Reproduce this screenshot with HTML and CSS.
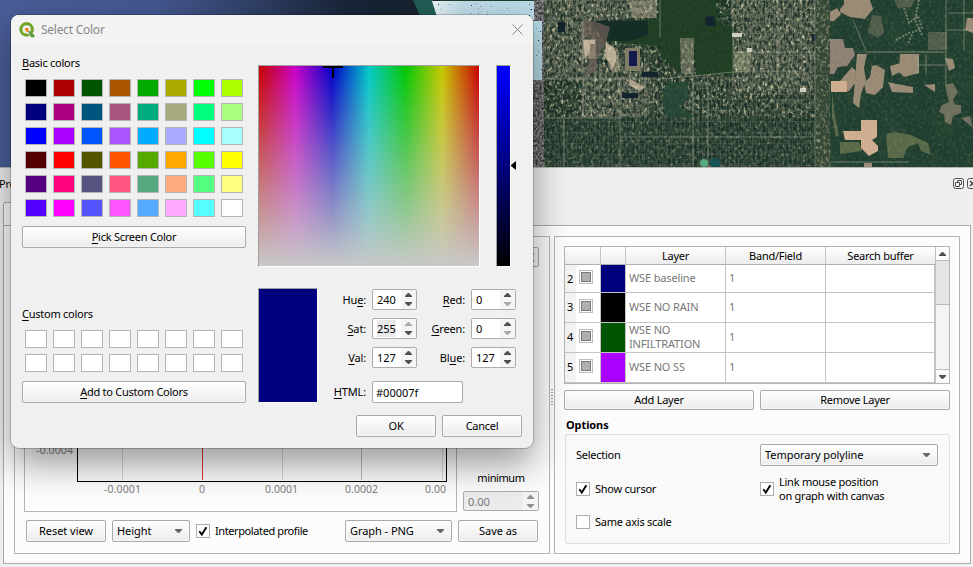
FILE: index.html
```html
<!DOCTYPE html>
<html lang="en">
<head>
<meta charset="utf-8">
<title>Select Color</title>
<link rel="stylesheet" href="styles.css">
</head>
<body>
<svg class="defs" width="0" height="0" aria-hidden="true">
  <symbol id="up" viewBox="0 0 7 4"><path d="M3 0h1l1 1 1 1 1 1v1H0V3l1-1 1-1z"/></symbol>
  <symbol id="down" viewBox="0 0 7 4"><path d="M0 0h7v1L4 4H3L0 1z"/></symbol>
  <symbol id="check" viewBox="0 0 12 12"><path d="M2.3 6.2l2.5 3.3L9.4 2.3" fill="none" stroke="#000" stroke-width="1.9"/></symbol>
</svg>
<main class="window">
  <svg class="map" viewBox="0 0 973 167" width="973" height="167" aria-hidden="true">
    <defs>
      <linearGradient id="sea" x1="0" x2="1"><stop offset="0" stop-color="#4a5d98"/><stop offset=".35" stop-color="#455791"/><stop offset=".55" stop-color="#33436b"/><stop offset=".8" stop-color="#182437"/><stop offset="1" stop-color="#15222b"/></linearGradient>
      <linearGradient id="ice" x1="0" x2="1"><stop offset="0" stop-color="#e8f2f6"/><stop offset=".3" stop-color="#bedbe6"/><stop offset="1" stop-color="#b7d9e5"/></linearGradient>
      <filter id="town" x="0" y="0" width="100%" height="100%"><feTurbulence type="fractalNoise" baseFrequency=".34 .28" numOctaves="3" seed="7"/><feColorMatrix values="1.2 .4 0 0 -.22  1.1 .4 0 0 -.18  .9 .4 0 0 -.19  3.6 0 0 0 -1.6"/></filter>
      <filter id="dark" x="0" y="0" width="100%" height="100%"><feTurbulence type="fractalNoise" baseFrequency=".38 .22" numOctaves="2" seed="21"/><feColorMatrix values="0 0 0 0 .07  0 0 0 0 .15  0 0 0 0 .12  0 5 0 0 -2.2"/></filter>
      <filter id="wood" x="0" y="0" width="100%" height="100%"><feTurbulence type="fractalNoise" baseFrequency=".045" numOctaves="4" seed="3"/><feColorMatrix values="0 0 0 0 .3  0 0 0 0 .38  0 0 0 0 .24  2.2 0 0 0 -.95"/></filter>
      <filter id="specks" x="0" y="0" width="100%" height="100%"><feTurbulence type="fractalNoise" baseFrequency=".55" numOctaves="1" seed="9"/><feColorMatrix values="0 0 0 0 .12  0 0 0 0 .15  0 0 0 0 .2  18 0 0 0 -12.6"/></filter>
      <filter id="gray" x="0" y="0" width="100%" height="100%"><feTurbulence type="fractalNoise" baseFrequency=".5 .4" numOctaves="2" seed="4"/><feColorMatrix values=".8 0 0 0 0  .8 0 0 0 0  .8 0 0 0 .01  0 0 0 0 1"/></filter>
      <pattern id="streets" width="9" height="11" patternUnits="userSpaceOnUse"><path d="M0 .5h9M.5 0v11M5.5 0v11" stroke="#8a907d" stroke-width=".7" opacity=".3"/></pattern>
    </defs>
    <rect width="973" height="167" fill="#213f30"/>
    <rect x="533" width="440" height="167" filter="url(#wood)" opacity=".6"/>
    <path d="M533 0H654L644 20H590V40L644 50 693 75H733L750 12 815 0V167H533z" fill="#34483a"/>
    <path d="M544 0H656V18L600 20 588 35V64L650 62V79H533V0zM582 79H650V117H582zM730 0H815V95H733z" fill="#6c7261" opacity=".6"/>
    <path d="M533 0H654L644 20H596L590 62 620 79H733V10L815 0V167H533z" filter="url(#town)" opacity=".5"/>
    <path d="M533 0H654V79H650V117H582V79H533zM733 0H815V95H733z" filter="url(#town)" opacity=".35"/>
    <rect x="533" y="0" width="283" height="167" filter="url(#dark)" opacity=".75"/>
    <path d="M533 0H650V79H533zM690 76H816V167H544V118H585V79H690zM735 0H816V76H735z" fill="url(#streets)"/>
    <path d="M650 118H816V167H544V118z" fill="#18362a" opacity=".25"/>
    <path d="M659 0H716L718 20 724 25 733 27V74H696L694 40 680 38V74L661 55V46L620 43 597 30V21L645 20 658 18z" fill="#203e23" opacity=".93"/>
    <path d="M590 21H648V35L630 41H604z" fill="#142d26"/>
    <path d="M666 83l22-2v18l-8 8 17 10h-30l-5-18z" fill="#254736" opacity=".85"/>
    <path d="M582 21h12l16 6-4 15-8 15-2 14-11 6 4-18 1-20-9-4z" fill="#6c5f58" opacity=".75"/>
    <path d="M582 39h14v20h-13zM605 42l13 7 3 16-8 10-5-13zM629 2l28-2v18h-24zM680 38h14v36h-13z" fill="#d1bea0" opacity=".35"/>
    <path d="M583 40h12v4h-5v9l-5 5zM606 43l8 5 3 9-4 12-4-7-5-5zM630 79l15 8-5 4-12-6z" fill="#e0cbb0" opacity=".65"/>
    <path d="M625 48h15v23h-15z" fill="#817c65"/><path d="M629 51h8v15h-8z" fill="#11194d"/>
    <path d="M642 72h16v5h-16zM622 93h16v5h-16zM705 17l9-1 2 10h-10zM558 22h7v10h-7zM812 34h7v7h-7z" fill="#13242e"/>
    <g fill="none" stroke="#b1b4a1" stroke-width=".8" opacity=".6"><path d="M533 79H660l44-4 29-3 17-1h50M533 118h88M620 79v88M621 137h194M583 0v118M564 118v49M660 0v38M708 79v88M733 0v72M778 0v79M815 0v167M736 52h210M693 75v92"/></g>
    <path d="M734 51l16 1v19l-16-1z" fill="#b2b692" opacity=".4"/><path d="M747 48h5v4h-5zM732 33h10v4h-10zM800 88h6v4h-6z" fill="#e3e0d2" opacity=".85"/>
    <path d="M816 0H973V167H824L816 120z" fill="#203f30" opacity=".7"/>
    <g fill="#998a75">
      <path d="M840 9l4-5V0h26l3 9-8 10-15-2-10-5zM830 12l7-4 4 6-7 7h-4z"/>
      <path d="M830 39h13l2 9h8l2 7-8 11-9 1-4 7h-4z" fill="#8d8174"/>
      <path d="M857 54h10l-3 14 2 12-5 14-2 14-6-5 2-23zM872 66l4-1 9 5-2 17-8 8-9-2-2-10 6-6z"/>
      <path d="M846 74l6-7 4 4-1 12-6 8-9 1v-11z"/>
      <path d="M900 54h19v19l-15 4-5-5zM890 66l10-3v9l-8 4zM888 82l9 2 16 3v6l-21-1zM924 85l11-1v8z"/>
      <path d="M945 85l8-2 5 9-5 7 2 6h6v8l-8 3-2 9-6-3-1-8-5-2 3-7 7-3zM961 118l9-2 3 12z" opacity=".65"/>
      <path d="M872 15l9 1 3 16-6 6-10-5zM894 0h21l-4 7-13 1zM928 32h19v18h-19z" opacity=".4"/>
      <path d="M945 58l8 1 2 9-6 3zM967 18h6v15l-8-3zM864 163h8v4h-8z"/>
    </g>
    <path d="M831 81h16v11h-16zM843 131h18v-11h16v17l-5 3 6 6v5l-9 5-8-8v-8h-16z" fill="#cfae91"/>
    <path d="M840 142h19l3 9-22 3zM886 134l8-2 17 3 17 8 3 12-10-4-3-8-10 4-5 11h-15z" fill="#6b7851" opacity=".75"/>
    <path d="M832 92l3 24 4 19-3 2-4-20z" fill="#6f7955" opacity=".7"/>
    <g fill="none" stroke="#b7b69b" stroke-width=".9" opacity=".55"><path d="M853 20l13 31M866 52h80M946 0v85M918 56v18M926 55v20M919 65h27M948 13h25M947 30h26M964 0v51M824 162h85"/><path d="M904 8l5 15 9-7 4 12-9 4-5 12M919 0l-4 20 7 15M896 40l15-8" stroke-dasharray="2 1.5" stroke-width="2"/></g>
    <path d="M816 0H830V167H816z" fill="#3d4b3a" opacity=".7"/><rect x="816" width="14" height="167" filter="url(#town)" opacity=".35"/>
    <rect x="816" width="157" height="167" filter="url(#town)" opacity=".1"/>
    <circle cx="704" cy="163" r="4" fill="#58aa83"/><circle cx="715" cy="163" r="5" fill="#155256"/>
    <rect width="440" height="167" fill="url(#sea)"/><path d="M413 0h20l6 16h-19z" fill="#205d55"/>
    <rect x="533" width="11" height="167" filter="url(#gray)"/>
    <path d="M432 1H534V20H438z" fill="url(#ice)"/><rect x="533" y="21" width="9" height="59" fill="#b5d9e4"/>
    <rect x="436" y="1" width="97" height="19" filter="url(#specks)"/><rect x="533" y="21" width="9" height="59" filter="url(#specks)"/>
  </svg>
  <header class="dock-title"><span>Profile Tool</span>
    <svg width="20" height="12" viewBox="0 0 20 12" fill="none" stroke="#505050"><rect x=".5" y=".5" width="10" height="10" rx="2"/><path d="M4.500 4V2.500h4v4H7M2.500 4.500h4v4h-4z"/><rect x="14.500" y=".5" width="10" height="10" rx="2"/><path d="M17 3l5 5M22 3l-5 5" stroke-width="1.700"/></svg>
  </header>
  <section class="tool">
    <div class="tab"></div>
    <div class="pane">
      <section class="group plot-group">
        <div class="plot-row">
          <div class="plot">
            <svg width="431" height="264" viewBox="0 0 431 264"><g fill="none" shape-rendering="crispEdges"><path d="M97.500 0v233M257.500 0v233M417.500 0v233" stroke="#d4d4d4"/><path d="M336.500 0v233" stroke="#bababa"/><path d="M177.500 0v233" stroke="#e03838"/><path d="M52.500 0V234.500H421.500V0" stroke="#000"/></g>
              <g class="axis"><text x="11" y="207" textLength="37">-0.0004</text><text x="79" y="246" textLength="37">-0.0001</text><text x="174" y="246">0</text><text x="240" y="246" textLength="33">0.0001</text><text x="320" y="246" textLength="33">0.0002</text><text x="400" y="246" textLength="21">0.00</text></g></svg>
          </div>
          <div class="limits"><div class="spin off"><span>0.00</span><i><svg><use href="#up"/></svg><svg><use href="#down"/></svg></i></div><label>minimum</label><div class="spin off"><span>0.00</span><i><svg><use href="#up"/></svg><svg><use href="#down"/></svg></i></div></div>
        </div>
        <div class="actions">
          <button class="w80">Reset view</button>
          <div class="combo w78">Height<svg><use href="#down"/></svg></div>
          <label class="check interp"><b><svg><use href="#check"/></svg></b><span>Interpolated profile</span></label>
          <div class="combo w107">Graph - PNG<svg><use href="#down"/></svg></div>
          <button class="w80">Save as</button>
        </div>
      </section>
      <div class="splitter"></div>
      <section class="group layers-group">
        <div class="table">
          <div class="grid">
            <div class="th"></div><div class="th"></div><div class="th">Layer</div><div class="th">Band/Field</div><div class="th">Search buffer</div>
            <div class="num">2</div><div class="tick"><b></b></div><div class="navy"></div><div class="td">WSE baseline</div><div class="td">1</div><div class="td"></div>
            <div class="num">3</div><div class="tick"><b></b></div><div class="black"></div><div class="td">WSE NO RAIN</div><div class="td">1</div><div class="td"></div>
            <div class="num">4</div><div class="tick"><b></b></div><div class="green"></div><div class="td">WSE NO<br>INFILTRATION</div><div class="td">1</div><div class="td"></div>
            <div class="num">5</div><div class="tick"><b></b></div><div class="violet"></div><div class="td">WSE NO SS</div><div class="td">1</div><div class="td"></div>
          </div>
          <div class="scroll"><i><svg><use href="#up"/></svg></i><em></em><i class="end"><svg><use href="#down"/></svg></i></div>
        </div>
        <div class="layer-buttons"><button>Add Layer</button><button>Remove Layer</button></div>
        <h2>Options</h2>
        <div class="options">
          <span>Selection</span><div class="combo poly">Temporary polyline<svg><use href="#down"/></svg></div>
          <label class="check"><b><svg><use href="#check"/></svg></b><span>Show cursor</span></label>
          <label class="check"><b><svg><use href="#check"/></svg></b><span>Link mouse position<br>on graph with canvas</span></label>
          <label class="check"><b></b><span>Same axis scale</span></label>
        </div>
      </section>
    </div>
  </section>
</main>

<section class="dialog">
  <header class="titlebar">
    <svg width="16" height="16" viewBox="0 0 16 16"><circle cx="7.600" cy="7.400" r="5.700" fill="none" stroke="#73a52d" stroke-width="3.200"/><path d="M8 8l2-.5 5.500 5.500v2H12L8 10.500z" fill="#f0f0f0"/><path d="M9 9h2.500l4 4.500v1.700H12z" fill="#5c9b35"/><path d="M6.500 6h3v3l-1.500 1-2-2z" fill="#ee7913"/></svg>
    <span>Select Color</span>
    <svg width="11" height="11" viewBox="0 0 11 11"><path d="M.5.5l10 10M10.500.5l-10 10" stroke="#858585"/></svg>
  </header>
  <div class="dialog-body">
    <div class="left">
      <p><u>B</u>asic colors</p>
      <div class="swatches" id="basic"></div>
      <button><span><u>P</u>ick Screen Color</span></button>
      <p class="custom"><u>C</u>ustom colors</p>
      <div class="swatches" id="custom"></div>
      <button><span><u>A</u>dd to Custom Colors</span></button>
    </div>
    <div class="right">
      <div class="pickers">
        <div class="spectrum"><svg width="20" height="12" viewBox="0 0 20 12"><path d="M0 0h20v2H0zM9 0h2v12H9z"/></svg></div>
        <div class="value"></div>
        <svg class="arrow" width="5" height="9" viewBox="0 0 5 9"><path d="M5 0v9L0 5V4z"/></svg>
      </div>
      <div class="details">
        <div class="preview"></div>
        <div class="fields">
          <label>Hu<u>e</u>:</label><div class="spin"><span>240</span><i><svg><use href="#up"/></svg><svg><use href="#down"/></svg></i></div>
          <label><u>R</u>ed:</label><div class="spin"><span>0</span><i><svg><use href="#up"/></svg><svg class="dim"><use href="#down"/></svg></i></div>
          <label><u>S</u>at:</label><div class="spin"><span><mark>255</mark></span><i><svg class="dim"><use href="#up"/></svg><svg><use href="#down"/></svg></i></div>
          <label><u>G</u>reen:</label><div class="spin"><span>0</span><i><svg><use href="#up"/></svg><svg class="dim"><use href="#down"/></svg></i></div>
          <label><u>V</u>al:</label><div class="spin"><span>127</span><i><svg><use href="#up"/></svg><svg><use href="#down"/></svg></i></div>
          <label>Bl<u>u</u>e:</label><div class="spin"><span>127</span><i><svg><use href="#up"/></svg><svg><use href="#down"/></svg></i></div>
          <label class="html"><u>H</u>TML:</label><div class="hex">#00007f</div>
        </div>
      </div>
      <footer><button>OK</button><button>Cancel</button></footer>
    </div>
  </div>
</section>
<script src="palette.js"></script>
</body>
</html>
```
FILE: styles.css
```css
* { box-sizing: border-box; }
body { margin: 0; width: 973px; height: 567px; overflow: hidden; background: #efefef; color: #000; font: 11px/14px "Noto Sans", "Open Sans", sans-serif; letter-spacing: -.25px; }
.defs { position: absolute; }
svg { display: block; flex: none; }
p, h2 { margin: 0; font: inherit; }
u { text-underline-offset: 2px; text-decoration-thickness: 1px; }
.window { display: flex; flex-direction: column; height: 567px; }
.map feTurbulence, .map feColorMatrix { color-interpolation-filters: sRGB; }
.dock-title { height: 35px; border-top: 1px solid #b5b5b5; display: flex; justify-content: space-between; padding: 9px 0 0; }
.dock-title span { margin-left: -1px; }
.dock-title svg { margin-top: 1px; }
.tool { margin: 0 2px 0 3px; height: 362px; display: flex; flex-direction: column; }
.tab { height: 24px; width: 120px; border: 1px solid #aaa; border-bottom: 0; border-radius: 3px 3px 0 0; background: #fcfcfc; margin-bottom: -1px; }
.pane { height: 339px; border: 1px solid #aaa; background: #fcfcfc; padding: 10px; display: flex; }
.group { border: 1px solid #b4b4b4; height: 318px; }
.plot-group { width: 536px; padding: 9px 10px 0 9px; }
.splitter { width: 4px; height: 17px; margin-top: 152px; background: radial-gradient(circle, #999 .6px, transparent .8px) 0 0 / 4px 3px; }
.plot-row { display: flex; gap: 6px; height: 266px; }
.plot { width: 433px; border: 1px solid #b4b4b4; background: #fdfdfd; }
.axis { font-size: 10.5px; fill: #808080; letter-spacing: 0; }
.limits { width: 77px; display: flex; flex-direction: column; padding-top: 1px; }
.limits label { text-align: center; margin: 204px 0 6px; letter-spacing: -.4px; }
.spin, .hex { height: 21px; background: #fff; border: 1px solid #acacac; border-radius: 2px; display: flex; overflow: hidden; letter-spacing: 0; }
.spin span { flex: 1; padding: 3px 0 0 4px; }
.spin mark { background: #e9e9e9; color: inherit; padding: 1px 0; }
.spin i { width: 15px; background: #f4f4f4; display: flex; flex-direction: column; align-items: center; justify-content: center; gap: 5px; }
.spin svg { width: 7px; height: 4px; fill: #505050; }
.spin svg.dim { fill: #a9a9a9; }
.spin.off { height: 20px; background: #ececec; color: #777; }
.spin.off svg { fill: #909090; }
.actions { display: flex; align-items: center; margin: 8px 0 0 2px; }
button, .combo { height: 22px; border: 1px solid #a9a9a9; border-radius: 2px; background: linear-gradient(#fff, #ececec); font: inherit; letter-spacing: inherit; color: #000; padding: 0; box-shadow: inset 0 0 0 1px #fff8; white-space: nowrap; }
.combo { display: flex; align-items: center; justify-content: space-between; padding: 0 7px 0 4px; letter-spacing: -.05px; }
.combo svg { width: 7px; height: 4px; fill: #666; }
.w80 { width: 80px; letter-spacing: -.05px; }
.w78 { width: 78px; margin: 0 6px; }
.w107 { width: 107px; margin-right: 6px; }
.check { display: flex; align-items: center; }
.check b { width: 14px; height: 14px; border: 1px solid #adadad; background: #fff; margin-right: 5px; flex: none; }
.check svg { width: 12px; height: 12px; }
.interp { width: 149px; letter-spacing: -.4px; white-space: nowrap; }
.layers-group { width: 406px; padding: 9px; }
.table { height: 138px; border: 1px solid #b4b4b4; display: flex; background: #fff; }
.grid { width: 371px; display: grid; grid-template-columns: 11px 25px 25px 100px 100px 109px; grid-template-rows: 18px 28px 30px 30px 30px; border-right: 1px solid #c0c0c0; }
.grid > div { border-right: 1px solid #c4c4c4; border-bottom: 1px solid #c4c4c4; }
.grid > .th { background: linear-gradient(#fff, #ececec); border-bottom-color: #b0b0b0; text-align: center; padding-top: 2px; }
.grid > .th:first-child { grid-column: span 2; }
.grid > .th:nth-child(5) { border-right: 0; }
.grid > .num { padding: 7px 0 0 2px; background: #f3f3f3; border-right: 0; }
.tick { display: flex; align-items: center; padding: 0 0 3px 3px; }
.tick b { width: 14px; height: 14px; border: 1px solid #bdbdbd; background: linear-gradient(#b0b0b0, #b0b0b0) content-box, linear-gradient(#777, #777) padding-box; padding: 2px; box-shadow: inset 0 0 0 1px #fff; }
.td { color: #777; padding: 0 0 2px 3px; display: flex; align-items: center; letter-spacing: -.15px; }
.navy { background: #00007f; }
.black { background: #000; }
.green { background: #005500; }
.violet { background: #aa00ff; }
.scroll { width: 13px; flex: 1; background: #f4f4f4; display: flex; flex-direction: column; }
.scroll i { height: 14px; background: #fbfbfb; border-bottom: 1px solid #bbb; display: grid; place-items: center; }
.scroll svg { width: 7px; height: 4px; fill: #505050; }
.scroll em { height: 44px; background: #e5e5e5; border-bottom: 1px solid #bbb; }
.scroll .end { border: 0; border-top: 1px solid #bbb; margin-top: auto; }
.layer-buttons { display: grid; grid-template-columns: 1fr 1fr; gap: 6px; margin-top: 6px; }
.layer-buttons button { height: 20px; line-height: 18px; }
h2 { font-weight: bold; margin: 8px 0 2px 2px; letter-spacing: -.1px; }
.options { margin-left: 1px; height: 110px; background: #f9f9f9; border: 1px solid #dedede; border-radius: 2px; padding: 9px 11px 0 10px; display: grid; grid-template-columns: 184px 178px; grid-template-rows: 22px 46px 20px; align-items: center; }
.dialog { position: absolute; left: 11px; top: 15px; width: 522px; height: 433px; border-radius: 8px; background: #f0f0f0; box-shadow: 0 0 0 1px #00000030, 0 16px 36px #00000066; }
.titlebar { height: 30px; background: #f3f3f3; border-radius: 8px 8px 0 0; display: flex; align-items: center; padding: 0 10px 1px 8px; color: #888; font-size: 12px; letter-spacing: -.25px; }
.titlebar span { flex: 1; margin-left: 6px; }
.dialog-body { display: flex; padding: 11px 11px 0; gap: 12px; }
.left { width: 224px; }
.left button { width: 224px; display: block; }
.swatches { display: grid; grid-template-columns: repeat(8, 22px); gap: 6px; margin: 9px 0 9px 3px; }
.swatches i { height: 18px; border: 1px solid #b5b5b5; }
.custom { margin-top: 59px; }
.right { width: 265px; }
.pickers { display: flex; padding-top: 9px; height: 211px; }
.spectrum { width: 222px; height: 202px; border: 1px solid #a0a0a0; border-right-color: #fff; border-bottom-color: #fff; background: linear-gradient(#c8c8c800, #c8c8c8), linear-gradient(90deg, #c80000, #c800c8 16.67%, #0000c8 33.33%, #00c8c8 50%, #00c800 66.67%, #c8c800 83.33%, #c80000); padding-left: 64px; }
.value { width: 15px; height: 202px; margin-left: 16px; border: 1px solid #a0a0a0; border-right-color: #fff; border-bottom-color: #fff; background: linear-gradient(#00f, #000); }
.arrow { margin: 96px 0 0; }
.details { display: flex; margin-top: 21px; }
.preview { width: 60px; height: 115px; border: 1px solid #a0a0a0; border-right-color: #fff; border-bottom-color: #fff; background: #00007f; }
.fields { display: grid; grid-template-columns: 54px 45px 54px 45px; grid-template-rows: 21px 21px 21px 22px; row-gap: 8px; margin-top: 1px; }
.fields label { text-align: right; padding: 4px 6px 0 0; letter-spacing: -.15px; }
.fields label.html, .hex { margin-top: 5px; }
.hex { grid-column: 2 / 4; width: 91px; height: 22px; padding: 4px 3px 0; }
footer { display: flex; gap: 6px; margin: 12px 0 0 98px; }
footer button { width: 80px; }
```
FILE: palette.js
```js
const basic = [
  "#000000", "#aa0000", "#005500", "#aa5500", "#00aa00", "#aaaa00", "#00ff00", "#aaff00",
  "#00007f", "#aa007f", "#00557f", "#aa557f", "#00aa7f", "#aaaa7f", "#00ff7f", "#aaff7f",
  "#0000ff", "#aa00ff", "#0055ff", "#aa55ff", "#00aaff", "#aaaaff", "#00ffff", "#aaffff",
  "#550000", "#ff0000", "#555500", "#ff5500", "#55aa00", "#ffaa00", "#55ff00", "#ffff00",
  "#55007f", "#ff007f", "#55557f", "#ff557f", "#55aa7f", "#ffaa7f", "#55ff7f", "#ffff7f",
  "#5500ff", "#ff00ff", "#5555ff", "#ff55ff", "#55aaff", "#ffaaff", "#55ffff", "#ffffff"
];
function fill(id, colors) {
  const box = document.getElementById(id);
  for (const c of colors) {
    const cell = document.createElement("i");
    cell.style.background = c;
    box.append(cell);
  }
}
fill("basic", basic);
fill("custom", Array(16).fill("#ffffff"));
```
